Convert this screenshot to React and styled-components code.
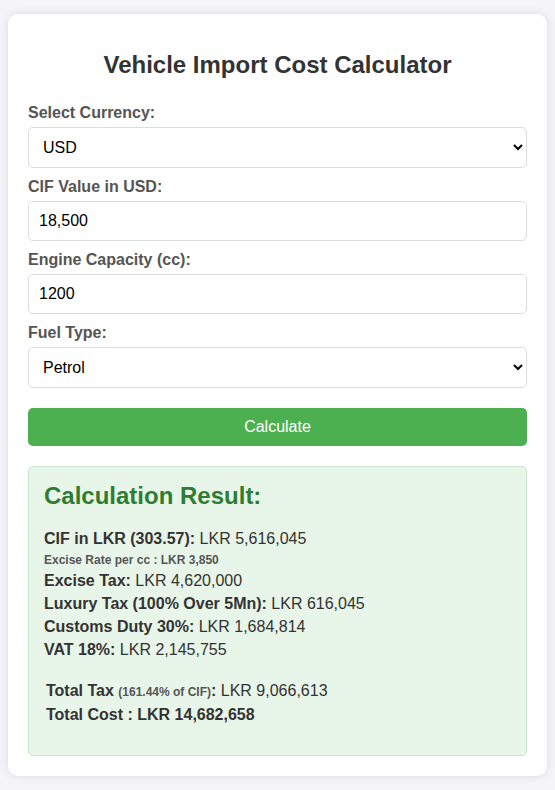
import React, { useState } from 'react';
import styled, { createGlobalStyle } from 'styled-components';

const GlobalStyle = createGlobalStyle`
	* {
		box-sizing: border-box;
	}
	body {
		margin: 0;
		padding: 14px 8px 15px;
		background-color: #f4f4f9;
		font-family: 'Liberation Sans', Arial, sans-serif;
		color: #333;
	}
`;

const Card = styled.div`
	background: #fff;
	border-radius: 10px;
	box-shadow: 0 0 10px rgba(0, 0, 0, 0.1);
	padding: 20px;
`;

const Title = styled.h2`
	margin: 17px 0 25px;
	font-size: 24px;
	text-align: center;
	color: #333;
`;

const Label = styled.label`
	display: block;
	margin-bottom: 5px;
	font-weight: bold;
	color: #555;
`;

const fieldStyles = `
	display: block;
	width: 100%;
	padding: 10px;
	margin-bottom: 10px;
	border: 1px solid #ddd;
	border-radius: 5px;
	font-family: 'Liberation Sans', Arial, sans-serif;
	font-size: 16px;
	color: #000;
	background: #fff;
`;

const Input = styled.input`
	${fieldStyles}
`;

const Select = styled.select`
	${fieldStyles}
`;

const Button = styled.button`
	display: block;
	width: 100%;
	margin-top: 20px;
	padding: 10px;
	border: none;
	border-radius: 5px;
	background-color: #4caf50;
	color: #fff;
	font-family: 'Liberation Sans', Arial, sans-serif;
	font-size: 16px;
	cursor: pointer;
`;

const Result = styled.div`
	margin-top: 20px;
	padding: 15px;
	background-color: #e8f5e9;
	border: 1px solid #c8e6c9;
	border-radius: 5px;

	h3 {
		margin: 0 0 20px;
		font-size: 24px;
		color: #2e7d32;
	}
`;

const Row = styled.p`
	margin: 5px 0;
	font-size: ${(p) => (p.$small ? '12px' : '16px')};
	line-height: ${(p) => (p.$small ? 'normal' : '18px')};
	font-weight: ${(p) => (p.$small ? 'bold' : 'normal')};
	color: ${(p) => (p.$small ? '#555' : '#333')};
`;

const Totals = styled.div`
	margin: 23px 0 16px;
	padding-left: 2px;

	small {
		font-size: 12px;
		font-weight: bold;
		color: #555;
	}
`;

export default function App() {
	const [currency, setCurrency] = useState('USD');
	const [cif, setCif] = useState('18,500');
	const [engine, setEngine] = useState('1200');
	const [fuel, setFuel] = useState('Petrol');

	return (
		<>
			<GlobalStyle />
			<Card>
				<Title>Vehicle Import Cost Calculator</Title>

				<Label htmlFor='currency'>Select Currency:</Label>
				<Select id='currency' value={currency} onChange={(e) => setCurrency(e.target.value)}>
					<option>USD</option>
					<option>JPY</option>
					<option>EUR</option>
					<option>GBP</option>
				</Select>

				<Label htmlFor='cif'>CIF Value in {currency}:</Label>
				<Input id='cif' value={cif} onChange={(e) => setCif(e.target.value)} />

				<Label htmlFor='engine'>Engine Capacity (cc):</Label>
				<Input id='engine' value={engine} onChange={(e) => setEngine(e.target.value)} />

				<Label htmlFor='fuel'>Fuel Type:</Label>
				<Select id='fuel' value={fuel} onChange={(e) => setFuel(e.target.value)}>
					<option>Petrol</option>
					<option>Diesel</option>
					<option>Hybrid</option>
					<option>Electric</option>
				</Select>

				<Button>Calculate</Button>

				<Result>
					<h3>Calculation Result:</h3>
					<Row><strong>CIF in LKR (303.57):</strong> LKR 5,616,045</Row>
					<Row $small>Excise Rate per cc : LKR 3,850</Row>
					<Row><strong>Excise Tax:</strong> LKR 4,620,000</Row>
					<Row><strong>Luxury Tax (100% Over 5Mn):</strong> LKR 616,045</Row>
					<Row><strong>Customs Duty 30%:</strong> LKR 1,684,814</Row>
					<Row><strong>VAT 18%:</strong> LKR 2,145,755</Row>

					<Totals>
						<Row><strong>Total Tax <small>(161.44% of CIF)</small>:</strong> LKR 9,066,613</Row>
						<Row><strong>Total Cost : LKR 14,682,658</strong></Row>
					</Totals>
				</Result>
			</Card>
		</>
	);
}
